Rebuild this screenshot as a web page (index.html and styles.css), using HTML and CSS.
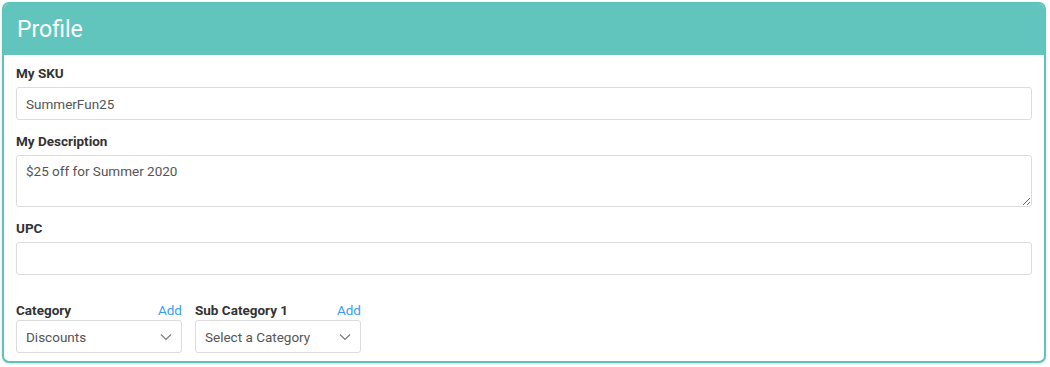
FILE: index.html
```html
<!DOCTYPE html>
<html lang="en">
<head>
  <meta charset="UTF-8">
  <title>Profile</title>
  <link rel="stylesheet" href="styles.css">
</head>
<body>
  <div class="card">
    <div class="card-header">
      <h2>Profile</h2>
    </div>
    <div class="card-body">
      <div class="field">
        <label for="sku">My SKU</label>
        <input type="text" id="sku" value="SummerFun25">
      </div>
      <div class="field">
        <label for="desc">My Description</label>
        <textarea id="desc">$25 off for Summer 2020</textarea>
      </div>
      <div class="field">
        <label for="upc">UPC</label>
        <input type="text" id="upc">
      </div>
      <div class="selects">
        <div class="select-field">
          <div class="select-head">
            <label for="category">Category</label>
            <a href="#" class="add-link">Add</a>
          </div>
          <div class="select-box">
            <select id="category">
              <option>Discounts</option>
            </select>
            <svg class="chevron" width="12" height="8" viewBox="0 0 12 8"><path d="M1 1.5l5 5 5-5" fill="none" stroke="#777" stroke-width="1.1"/></svg>
          </div>
        </div>
        <div class="select-field">
          <div class="select-head">
            <label for="subcategory">Sub Category 1</label>
            <a href="#" class="add-link">Add</a>
          </div>
          <div class="select-box">
            <select id="subcategory">
              <option>Select a Category</option>
            </select>
            <svg class="chevron" width="12" height="8" viewBox="0 0 12 8"><path d="M1 1.5l5 5 5-5" fill="none" stroke="#777" stroke-width="1.1"/></svg>
          </div>
        </div>
      </div>
    </div>
  </div>
</body>
</html>
```

FILE: styles.css
```css
body {
  margin: 0;
  padding: 2px;
  font-family: Roboto, "Liberation Sans", Arial, sans-serif;
  background: #ffffff;
  color: #333;
}
.card {
  width: 1044px;
  box-sizing: border-box;
  border: 2px solid #5ec4ba;
  border-radius: 7px;
  overflow: hidden;
  box-shadow: 0 1px 3px rgba(0, 0, 0, 0.15);
  background: #fff;
}
.card-header {
  background: #62c5bd;
  height: 51px;
  display: flex;
  align-items: center;
  padding: 0 13px;
}
.card-header h2 {
  margin: 0;
  font-size: 23px;
  font-weight: 400;
  color: #fff;
}
.card-body {
  padding: 10px 12px 8px;
}
.field {
  display: flex;
  flex-direction: column;
  margin-bottom: 13px;
}
.field label, .select-head label {
  font-size: 13.5px;
  font-weight: 700;
  color: #333;
  line-height: 16px;
  margin-bottom: 6px;
}
.field input, .field textarea, .select-box select {
  font-family: inherit;
  font-size: 13.5px;
  color: #555;
  border: 1px solid #dcdcdc;
  border-radius: 3px;
  box-sizing: border-box;
  padding: 0 9px;
  background: #fff;
  outline: none;
}
.field input {
  height: 33px;
}
.field textarea {
  height: 52px;
  padding-top: 7px;
  resize: vertical;
}
.selects {
  display: flex;
  gap: 13px;
  margin-top: 27px;
}
.select-field {
  width: 166px;
}
.select-head {
  display: flex;
  justify-content: space-between;
  align-items: center;
}
.select-head label {
  margin-bottom: 2px;
}
.add-link {
  font-size: 13.5px;
  color: #3b9cf5;
  text-decoration: none;
  line-height: 16px;
  margin-bottom: 2px;
}
.select-box {
  position: relative;
}
.select-box select {
  width: 100%;
  height: 33px;
  appearance: none;
  -webkit-appearance: none;
}
.chevron {
  position: absolute;
  right: 10px;
  top: 13px;
  pointer-events: none;
}
```
